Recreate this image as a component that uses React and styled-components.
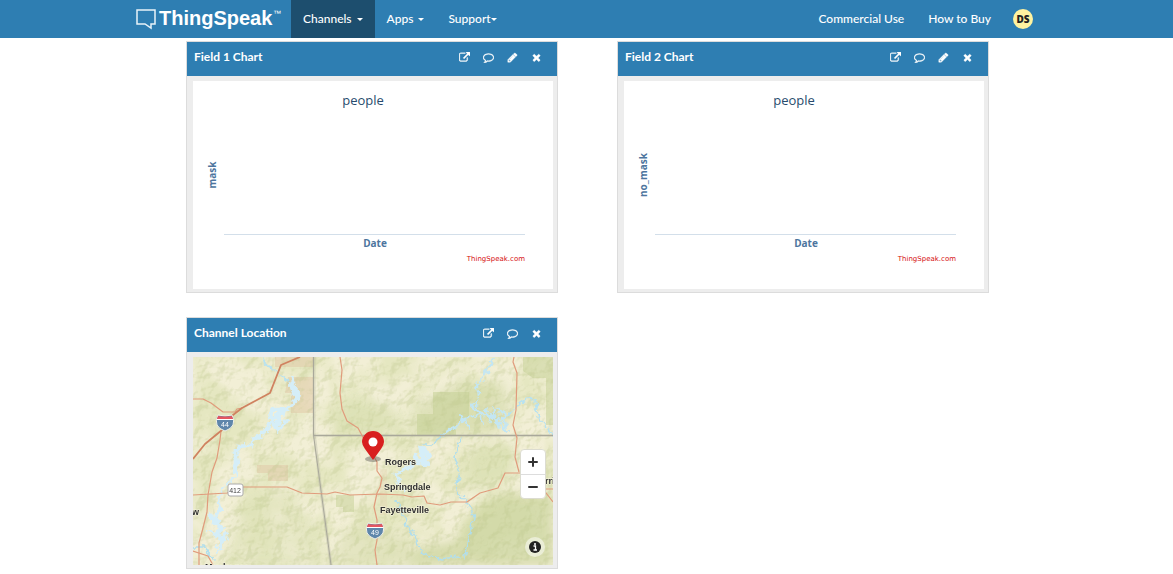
import React from "react";
import styled, { createGlobalStyle } from "styled-components";

const GlobalStyle = createGlobalStyle`
  * { box-sizing: border-box; }
  body { margin: 0; background: #fff; font-family: "Open Sans", "Noto Sans", sans-serif; }
  button { font: inherit; padding: 0; border: 0; cursor: pointer; }
`;

/* ---------- navigation ---------- */

const NavBar = styled.header`
  background: #2e7eb2;
  color: #fff;
`;

const NavInner = styled.nav`
  display: flex;
  align-items: stretch;
  justify-content: space-between;
  max-width: 905px;
  height: 38px;
  margin: 0 auto;
  padding-left: 1px;
`;

const NavGroup = styled.div`
  display: flex;
  align-items: stretch;
`;

const Brand = styled.a`
  display: flex;
  align-items: center;
  width: 156px;
  color: #fff;
`;

const NavItem = styled.a`
  display: flex;
  align-items: center;
  gap: ${(p) => (p.$tight ? 0 : 5)}px;
  padding: 0 12px;
  font-family: Lato, "Open Sans", sans-serif;
  font-size: 12px;
  line-height: 16px;
  font-weight: 500;
  white-space: nowrap;
  color: #fff;
  text-decoration: none;
  background: ${(p) => (p.$active ? "#1d4e6e" : "transparent")};
`;

const Caret = styled.span`
  border-top: 3px solid currentColor;
  border-left: 3px solid transparent;
  border-right: 3px solid transparent;
`;

const Avatar = styled.button`
  align-self: center;
  width: 20px;
  height: 20px;
  margin: 0 6px 0 10px;
  border-radius: 50%;
  background: #fff3a0;
  color: #222;
  && { font-size: 10px; font-weight: 800; line-height: 20px; }
`;

const Logo = () => (
  <svg width="148" height="24" viewBox="0 0 148 24" role="img" aria-label="ThingSpeak">
    <path d="M2 3H20V17H16V21L10 17H2Z" fill="none" stroke="#e9f3f9" strokeWidth="1.500" />
    <text x="24" y="18" fill="#fff" fontFamily="Liberation Sans, sans-serif" fontSize="20" fontWeight="700">ThingSpeak</text>
    <text x="138" y="9" fill="#fff" fontFamily="Liberation Sans, sans-serif" fontSize="8">™</text>
  </svg>
);

/* ---------- panels ---------- */

const Board = styled.main`
  display: grid;
  grid-template-columns: repeat(2, minmax(0, 1fr));
  gap: 24px 59px;
  max-width: 805px;
  margin: 0 auto;
  padding: 3px 0 5px 2px;
`;

const Panel = styled.section`
  border: 1px solid #dcdcdc;
  background: #ededed;
`;

const PanelHeader = styled.div`
  display: flex;
  justify-content: space-between;
  height: 34px;
  padding: 7px 15px 0 7px;
  background: #2e7eb2;
  color: #fff;
`;

const PanelTitle = styled.h2`
  margin: 0;
  font-family: Lato, "Open Sans", sans-serif;
  font-size: 12px;
  line-height: 16px;
  font-weight: 700;
`;

const Actions = styled.div`
  display: flex;
  gap: 13px;
  height: 17px;
`;

const ActionButton = styled.button`
  display: flex;
  align-items: center;
  width: 11px;
  background: none;
  color: #fff;
`;

const PanelBody = styled.div`
  padding: 5px 4px 3px 6px;
`;

const iconPaths = {
  open: "M1408 928v320q0 119-84.5 203.5t-203.5 84.5h-832q-119 0-203.5-84.5t-84.5-203.5v-832q0-119 84.5-203.5t203.5-84.5h704q14 0 23 9t9 23v64q0 14-9 23t-23 9h-704q-66 0-113 47t-47 113v832q0 66 47 113t113 47h832q66 0 113-47t47-113v-320q0-14 9-23t23-9h64q14 0 23 9t9 23zm384-864v512q0 26-19 45t-45 19-45-19l-176-176-652 652q-10 10-23 10t-23-10l-114-114q-10-10-10-23t10-23l652-652-176-176q-19-19-19-45t19-45 45-19h512q26 0 45 19t19 45z",
  comment: "M896 384q-204 0-381.5 69.5t-282 187.5-104.5 255q0 112 71.5 213.5t201.5 175.5l87 50-27 96q-24 91-70 172 152-63 275-171l43-38 57 6q69 8 130 8 204 0 381.5-69.5t282-187.5 104.5-255-104.5-255-282-187.5-381.5-69.5zm896 512q0 174-120 321.5t-326 233-450 85.5q-70 0-145-8-198 175-460 242-49 14-114 22h-5q-15 0-27-10.5t-16-27.5v-1q-3-4-.5-12t2-10 4.5-9.5l6-9 7-8.5 8-9q7-8 31-34.5t34.5-38 31-39.5 32.5-51 27-59 26-76q-157-89-247.5-220t-90.5-281q0-174 120-321.5t326-233 450-85.5 450 85.5 326 233 120 321.5z",
  edit: "M491 1536l91-91-235-235-91 91v107h128v128h107zm523-928q0-22-22-22-10 0-17 7l-542 542q-7 7-7 17 0 22 22 22 10 0 17-7l542-542q7-7 7-17zm-54-192l416 416-832 832h-416v-416zm683 96q0 53-37 90l-166 166-416-416 166-165q36-38 90-38 53 0 91 38l235 234q37 39 37 91z",
  close: "M1490 1322q0 40-28 68l-136 136q-28 28-68 28t-68-28l-294-294-294 294q-28 28-68 28t-68-28l-136-136q-28-28-28-68t28-68l294-294-294-294q-28-28-28-68t28-68l136-136q28-28 68-28t68 28l294 294 294-294q28-28 68-28t68 28l136 136q28 28 28 68t-28 68l-294 294 294 294q28 28 28 68z",
};

const Icon = ({ name }) => (
  <svg width="11" height="11" viewBox="0 0 1792 1792" fill="currentColor" stroke="currentColor" strokeWidth="60" aria-hidden="true">
    <path d={iconPaths[name]} />
  </svg>
);

const Widget = ({ title, actions, children }) => (
  <Panel>
    <PanelHeader>
      <PanelTitle>{title}</PanelTitle>
      <Actions>
        {actions.map((name) => (
          <ActionButton key={name} type="button" aria-label={name}>
            <Icon name={name} />
          </ActionButton>
        ))}
      </Actions>
    </PanelHeader>
    <PanelBody>{children}</PanelBody>
  </Panel>
);

/* ---------- charts ---------- */

const ChartSvg = styled.svg`
  display: block;
  width: 100%;
  height: 208px;
  background: #fff;
`;

const Chart = ({ title, yLabel }) => (
  <ChartSvg viewBox="0 0 360 208">
    <text x="170" y="24" textAnchor="middle" fontSize="13" fill="#274b6d">{title}</text>
    <text transform="translate(23 94) rotate(-90)" textAnchor="middle" fontSize="10" fontWeight="700" fill="#4d759e">{yLabel}</text>
    <path d="M31 153.500H332" stroke="#d3dfea" />
    <text x="182" y="166" textAnchor="middle" fontSize="10" fontWeight="700" fill="#4d759e">Date</text>
    <a href="https://thingspeak.com">
      <text x="332" y="180" textAnchor="end" fontFamily="DejaVu Sans, sans-serif" fontSize="7" fill="#d61010">ThingSpeak.com</text>
    </a>
  </ChartSvg>
);

/* ---------- map ---------- */

const MapFrame = styled.div`
  position: relative;
  height: 208px;
  overflow: hidden;
`;

const MapSvg = styled.svg`
  display: block;
  width: 100%;
  height: 100%;
`;

const ZoomGroup = styled.div`
  position: absolute;
  right: 7px;
  top: 92px;
  display: flex;
  flex-direction: column;
  width: 26px;
  border: 1px solid #dcdcd0;
  border-radius: 4px;
  background: #fff;
`;

const ZoomButton = styled.button`
  display: flex;
  align-items: center;
  justify-content: center;
  height: 24px;
  background: none;
  & + & { border-top: 1px solid #ddd; }
`;

const InfoButton = styled.button`
  position: absolute;
  right: 8px;
  bottom: 8px;
  display: flex;
  align-items: center;
  justify-content: center;
  width: 20px;
  height: 20px;
  border-radius: 50%;
  background: rgba(255, 255, 255, 0.5);
`;

const Shield = ({ x, y, label }) => (
  <g transform={`translate(${x} ${y})`}>
    <path d="M-7 -8Q0 -6 7 -8Q10 -3 8 2Q6 6 0 8Q-6 6 -8 2Q-10 -3 -7 -8Z" fill="#5f86ab" stroke="#f4f2e4" />
    <path d="M-7 -7Q0 -6 7 -7L8 -4H-8Z" fill="#e55560" />
    <path d="M-8 -3.500H8" stroke="#fff" />
    <text y="4" textAnchor="middle" fontSize="7" fill="#fff">{label}</text>
  </g>
);

const Town = ({ x, y, children }) => (
  <text x={x} y={y} fontSize="9" fontWeight="700" fill="#303030" stroke="#f5f3dc" strokeWidth="1" paintOrder="stroke">{children}</text>
);

const LocationMap = () => (
  <MapFrame>
    <MapSvg viewBox="0 0 360 208" preserveAspectRatio="xMidYMid slice" fontFamily="Liberation Sans, sans-serif" role="img" aria-label="Map of the channel location">
      <defs>
        <filter id="relief" x="0" y="0" width="100%" height="100%" colorInterpolationFilters="sRGB">
          <feTurbulence type="fractalNoise" baseFrequency="0.07" numOctaves="4" seed="8" />
          <feDiffuseLighting surfaceScale="4" lightingColor="#fff" result="light">
            <feDistantLight azimuth="225" elevation="55" />
          </feDiffuseLighting>
          <feColorMatrix values="0 0 0 0 0.72  0 0 0 0 0.76  0 0 0 0 0.52  -3 0 0 0 2.5" />
          <feComposite in2="SourceAlpha" operator="in" />
        </filter>
        <filter id="cover" x="0" y="0" width="100%" height="100%" colorInterpolationFilters="sRGB">
          <feTurbulence type="fractalNoise" baseFrequency="0.022" numOctaves="4" seed="3" />
          <feColorMatrix values="0 0 0 0 0.84  0 0 0 0 0.87  0 0 0 0 0.66  4 0 0 0 -1.6" />
        </filter>
        <filter id="shore" x="-10%" y="-10%" width="120%" height="120%" colorInterpolationFilters="sRGB">
          <feTurbulence type="fractalNoise" baseFrequency="0.2" numOctaves="2" seed="5" />
          <feDisplacementMap in="SourceGraphic" scale="8" xChannelSelector="R" yChannelSelector="G" />
        </filter>
        <filter id="soft" x="-20%" y="-20%" width="140%" height="140%"><feGaussianBlur stdDeviation="5" /></filter>
      </defs>

      <rect width="360" height="208" fill="#f2efd6" />
      <rect width="360" height="208" filter="url(#cover)" opacity="0.450" />
      <g fill="#cdd6a0" filter="url(#soft)" opacity="0.750">
        <path d="M210 208L225 190L260 185L285 150L315 135L360 140V208Z" />
        <path d="M140 208L150 175L180 165L215 180L225 208Z" opacity="0.500" />
        <path d="M30 208L45 150L90 130L115 160L130 208Z" opacity="0.300" />
        <path d="M224 50L265 25L310 25L318 60L300 78L220 78Z" opacity="0.700" />
        <path d="M275 95L320 85L320 115L280 135Z" opacity="0.400" />
        <path d="M140 60L165 40L200 50L210 75L140 76Z" opacity="0.400" />
      </g>
      <g fill="#c3d094" opacity="0.500">
        <path d="M240 35H276V60L263 66V78H224V57H240Z" />
        <path d="M330 0H360V68H353V21H340L330 14Z" />
        <path d="M143 138H161V155H150V150H143Z" />
      </g>
      <g fill="#e2cbaa" opacity="0.550">
        <path d="M82 0H121V10H82Z" />
        <path d="M95 20H121V56H98V36H92Z" />
        <path d="M64 108H95V124H75V116H64Z" />
        <path d="M187 112H194V158H187Z" opacity="0.500" />
      </g>
      <path d="M0 0H360V208H0Z" filter="url(#relief)" opacity="0.280" />

      <g filter="url(#shore)" fill="none" stroke="#d5eef8" strokeLinejoin="round" strokeLinecap="round">
        <path d="M70 0L72 8L82 13L89 19L96 25" strokeWidth="1.500" stroke="#b8e2f0" />
        <path d="M100 20L99 28L106 36L102 45L94 52L86 57L79 63L75 72L66 79L59 83" strokeWidth="4" />
        <path d="M83 70L89 54M104 40L97 30M77 60L84 73M92 52L81 53M79 52L78 66M86 72L94 64" strokeWidth="4" />
        <path d="M59 88L47 90L41 96L44 104L41 112L44 118" strokeWidth="4" />
        <path d="M44 118L31 130L25 139L27 153" strokeWidth="2" />
        <path d="M27 153L20 163L29 171L22 177L29 183L33 178L25 193M18 160L26 165M17 175L30 181" strokeWidth="4" />
        <path d="M300 1L293 16L284 29L286 40L279 50L289 57L300 60M288 57L272 62L265 68L257 72L250 78M288 57L303 60L313 67M300 50L306 73M282 45L290 68M310 55L314 74L303 64M293 52L297 66M268 58L276 70M303 52L313 58" strokeWidth="2" stroke="#c3e6f3" />
        <path d="M313 60L320 53L327 46L335 41L345 46L343 55L347 62L352 68L360 79" strokeWidth="1.500" stroke="#b8e2f0" />
        <path d="M231 92L236 100L225 105L234 106M223 98L219 110M228 90L232 109" strokeWidth="4" />
        <path d="M219 108L202 118L207 127L213 135" strokeWidth="3" />
        <path d="M268 81L262 100L267 116L262 133L274 146L281 158L277 176L272 201" strokeWidth="1.500" stroke="#b0deee" />
        <path d="M202 143L209 154L214 168L222 180L229 196L247 202L265 200" strokeWidth="1.500" stroke="#b0deee" />
        <path d="M0 190L11 190L20 202M250 78L239 87L231 87" strokeWidth="1.500" stroke="#b0deee" />
      </g>

      <g fill="none" stroke="#a9a89a">
        <path d="M121 0V78L122 83L127 126L138 208" strokeWidth="3" opacity="0.300" />
        <path d="M121 78.500H360" strokeWidth="3" opacity="0.300" />
        <path d="M120.500 0V78.500H360M120.500 78L127 126L138 208" />
      </g>

      <g fill="none" stroke="#e09b7c" strokeWidth="1.200" strokeLinejoin="round">
        <path d="M0 42H10L18 46L30 55H42L44 52L49 51" />
        <path d="M28 74L27 83L24 101L19 115L15 138L14 155L10 171L6 186V208" />
        <path d="M0 138L34 136L50 130H94L109 136L134 137L142 135L157 138L187 137L210 138L219 140L231 139L234 146L247 148L258 145L274 145L287 136L305 131L312 116H329" />
        <path d="M147 0L149 13L147 36L149 52L154 64L165 71L172 84L180 98L184 105L184 114L189 121L187 130L184 136L181 150L184 163V183L182 193L184 208" />
        <path d="M321 0L320 5L324 16L323 53L320 68L324 81L322 100L326 115" />
        <path d="M345 132H360M350 132L360 145M0 194L15 199L20 208" />
      </g>
      <path d="M107 0L88 8L77 36L49 51L40 58L29 73L12 87L0 102" fill="none" stroke="#d08260" strokeWidth="1.800" strokeLinejoin="round" />

      <Shield x={32} y={66} label="44" />
      <Shield x={182} y={174} label="49" />
      <rect x="35" y="127" width="15" height="12" rx="2" fill="#fff" stroke="#aaa" />
      <text x="42" y="136" textAnchor="middle" fontSize="7" fill="#444">412</text>

      <Town x={192} y={108}>Rogers</Town>
      <Town x={191} y={133}>Springdale</Town>
      <Town x={187} y={156}>Fayetteville</Town>
      <Town x={-1} y={158}>w</Town>
      <Town x={352} y={127}>rri</Town>
      <Town x={12} y={213}>Muskogee</Town>

      <ellipse cx="180" cy="102" rx="8" ry="3" fill="#333" opacity="0.350" />
      <path d="M180 103L172 92Q169 88 169 85A11 11 0 0 1 191 85Q191 88 188 92Z" fill="#d8201f" />
      <circle cx="180" cy="85" r="4.500" fill="#fff" />
    </MapSvg>
    <ZoomGroup>
      <ZoomButton type="button" aria-label="Zoom in">
        <svg width="10" height="10" viewBox="0 0 10 10"><path d="M1 5H9M5 1V9" stroke="#333" strokeWidth="2" strokeLinecap="round" /></svg>
      </ZoomButton>
      <ZoomButton type="button" aria-label="Zoom out">
        <svg width="10" height="10" viewBox="0 0 10 10"><path d="M1 5H9" stroke="#333" strokeWidth="2" strokeLinecap="round" /></svg>
      </ZoomButton>
    </ZoomGroup>
    <InfoButton type="button" aria-label="Map attribution">
      <svg width="12" height="12" viewBox="0 0 12 12">
        <circle cx="6" cy="6" r="6" fill="#222" />
        <path d="M4.500 5H6.500V9M4.500 9H8" fill="none" stroke="#fff" strokeWidth="1.300" />
        <circle cx="6" cy="3" r="1" fill="#fff" />
      </svg>
    </InfoButton>
  </MapFrame>
);

/* ---------- page ---------- */

const chartActions = ["open", "comment", "edit", "close"];
const mapActions = ["open", "comment", "close"];

export default function App() {
  return (
    <>
      <GlobalStyle />
      <NavBar>
        <NavInner>
          <NavGroup>
            <Brand href="#home"><Logo /></Brand>
            <NavItem href="#channels" $active>Channels <Caret /></NavItem>
            <NavItem href="#apps">Apps <Caret /></NavItem>
            <NavItem href="#support" $tight>Support<Caret /></NavItem>
          </NavGroup>
          <NavGroup>
            <NavItem href="#commercial">Commercial Use</NavItem>
            <NavItem href="#buy">How to Buy</NavItem>
            <Avatar type="button">DS</Avatar>
          </NavGroup>
        </NavInner>
      </NavBar>
      <Board>
        <Widget title="Field 1 Chart" actions={chartActions}><Chart title="people" yLabel="mask" /></Widget>
        <Widget title="Field 2 Chart" actions={chartActions}><Chart title="people" yLabel="no_mask" /></Widget>
        <Widget title="Channel Location" actions={mapActions}><LocationMap /></Widget>
      </Board>
    </>
  );
}
